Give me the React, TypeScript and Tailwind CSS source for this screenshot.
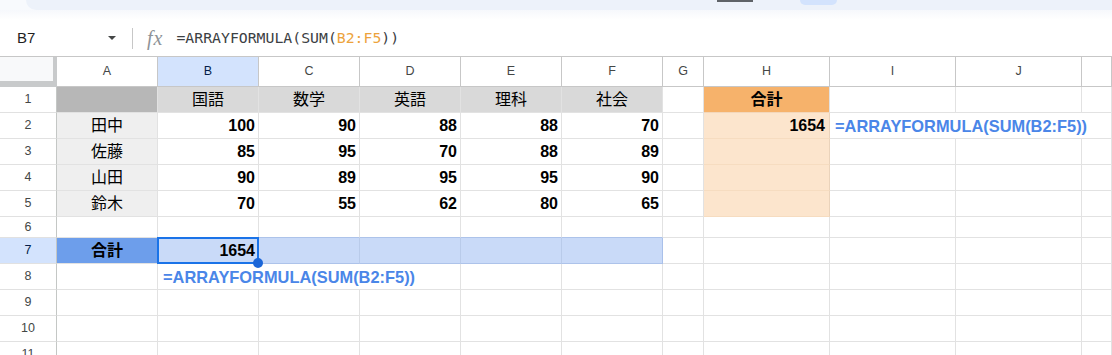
import { ReactNode } from "react";
import { twMerge } from "tailwind-merge";

const GRID =
  "grid grid-cols-[57px_101px_101px_101px_101px_101px_101px_41px_126px_126px_126px_1fr]";

const FONT = "font-['Liberation_Sans','Noto_Sans_CJK_JP',sans-serif]";

const FORMULA = "=ARRAYFORMULA(SUM(B2:F5))";

const scores = [
  { name: "田中", vals: [100, 90, 88, 88, 70] },
  { name: "佐藤", vals: [85, 95, 70, 88, 89] },
  { name: "山田", vals: [90, 89, 95, 95, 90] },
  { name: "鈴木", vals: [70, 55, 62, 80, 65] },
];

const subjects = ["国語", "数学", "英語", "理科", "社会"];

function Cell({
  className = "",
  children,
}: {
  className?: string;
  children?: ReactNode;
}) {
  return (
    <div
      className={twMerge(
        "relative flex items-end border-r border-b border-[#e2e2e2] pb-[3px] px-[3px] text-[16px] leading-[18px] text-black whitespace-nowrap",
        className
      )}
    >
      {children}
    </div>
  );
}

function RowHeader({ n, active = false }: { n: number; active?: boolean }) {
  return (
    <div
      className={twMerge(
        "flex items-center justify-center border-r border-b border-r-[#c4c7c5] border-b-[#e1e1e1] text-[12.5px] text-[#444746]",
        active && "bg-[#d3e3fd] text-[#041e49]"
      )}
    >
      {n}
    </div>
  );
}

const Empty = ({ n }: { n: number }) => (
  <>
    {Array.from({ length: n }).map((_, i) => (
      <Cell key={i} />
    ))}
  </>
);

export default function App() {
  return (
    <div className={`w-[1112px] h-[355px] overflow-hidden bg-white ${FONT}`}>
      {/* toolbar edge */}
      <div className="h-[10px] bg-[#f8fafd] flex">
        <div className="ml-[26px] flex-1 flex items-start bg-[#edf2fa] rounded-bl-[12px]">
          <div className="ml-[691px] w-[36px] h-[2px] bg-[#5f6368]" />
          <div className="ml-[47px] w-[37px] h-[5px] rounded-b-[6px] bg-[#d3e3fd]" />
        </div>
      </div>
      <div className="h-[10px] bg-gradient-to-b from-[#f6f8fc] to-white" />

      {/* formula bar */}
      <div className="h-[37px] flex items-center border-b border-[#c7c7c7]">
        <div className="w-[120px] flex items-center justify-between pl-[17px] pr-[4px]">
          <span className="text-[15px] text-[#1f1f1f]">B7</span>
          <svg width="8" height="4" viewBox="0 0 8 4">
            <polygon points="0,0 8,0 4,4" fill="#444746" />
          </svg>
        </div>
        <div className="ml-[12px] w-px h-[21px] bg-[#c7c7c7]" />
        <span className="ml-[14px] font-['Liberation_Serif',serif] italic text-[20px] tracking-[1px] text-[#8e9398] leading-none">
          fx
        </span>
        <span className="ml-[13px] font-['DejaVu_Sans_Mono',monospace] text-[14.8px] text-[#3c4043]">
          =ARRAYFORMULA(SUM(<span className="text-[#eda33c]">B2:F5</span>))
        </span>
      </div>

      {/* column headers */}
      <div className={`${GRID} h-[30px]`}>
        <div className="bg-[#f8f9fa] border-r-[4px] border-b-[6px] border-[#c8cacb]" />
        {["A", "B", "C", "D", "E", "F", "G", "H", "I", "J", ""].map((c) => (
          <div
            key={c || "K"}
            className={twMerge(
              "flex items-center justify-center border-r border-b border-[#c7c7c7] text-[12.5px] text-[#444746]",
              c === "B" && "bg-[#d3e3fd] text-[#041e49]"
            )}
          >
            {c}
          </div>
        ))}
      </div>

      {/* row 1 */}
      <div className={`${GRID} h-[26px]`}>
        <RowHeader n={1} />
        <Cell className="bg-[#b7b7b7]" />
        {subjects.map((s) => (
          <Cell key={s} className="bg-[#d9d9d9] justify-center">
            {s}
          </Cell>
        ))}
        <Cell />
        <Cell className="bg-[#f6b26b] justify-center font-bold border-b-[#f3d7bb]">
          合計
        </Cell>
        <Empty n={3} />
      </div>

      {/* rows 2-5 */}
      {scores.map((r, i) => (
        <div key={r.name} className={`${GRID} h-[26px]`}>
          <RowHeader n={i + 2} />
          <Cell className="bg-[#efefef] justify-center">{r.name}</Cell>
          {r.vals.map((v, j) => (
            <Cell key={j} className="justify-end font-bold">
              {v}
            </Cell>
          ))}
          <Cell />
          <Cell className="bg-[#fce5cd] justify-end font-bold border-b-[#f6dcc0] border-r-[#ead3bb] pr-[4px]">
            {i === 0 ? "1654" : ""}
          </Cell>
          {i === 0 ? (
            <Cell className="col-span-3 font-bold text-[16.4px] leading-[18px] text-[#4a86e8] pl-[5px]">
              {FORMULA}
            </Cell>
          ) : (
            <Empty n={3} />
          )}
        </div>
      ))}

      {/* row 6 */}
      <div className={`${GRID} h-[21px]`}>
        <RowHeader n={6} />
        <Cell />
        <Cell />
        <Cell className="border-b-[#adc3ea]" />
        <Cell className="border-b-[#adc3ea]" />
        <Cell className="border-b-[#adc3ea]" />
        <Cell className="border-b-[#adc3ea]" />
        <Empty n={5} />
      </div>

      {/* row 7 */}
      <div className={`${GRID} h-[26px]`}>
        <RowHeader n={7} active />
        <Cell className="bg-[#6d9eeb] justify-center font-bold">合計</Cell>
        <Cell className="bg-[#c9daf8] justify-end font-bold z-10">
          1654
          <span className="absolute -left-[1px] -top-[1px] -right-[1px] -bottom-[1px] border-2 border-[#1a73e8]" />
          <span className="absolute -right-[5px] -bottom-[5px] w-[10px] h-[10px] rounded-full bg-[#1b66d8]" />
        </Cell>
        <Cell className="bg-[#c9daf8] border-r-[#b9cbea] border-b-[#adc3ea]" />
        <Cell className="bg-[#c9daf8] border-r-[#b9cbea] border-b-[#adc3ea]" />
        <Cell className="bg-[#c9daf8] border-r-[#b9cbea] border-b-[#adc3ea]" />
        <Cell className="bg-[#c9daf8] border-r-[#a9c0ea] border-b-[#adc3ea]" />
        <Empty n={5} />
      </div>

      {/* row 8 */}
      <div className={`${GRID} h-[26px]`}>
        <RowHeader n={8} />
        <Cell />
        <Cell className="col-span-3 font-bold text-[16.4px] leading-[18px] text-[#4a86e8] pl-[5px]">
          {FORMULA}
        </Cell>
        <Empty n={7} />
      </div>

      {[9, 10, 11].map((n) => (
        <div key={n} className={`${GRID} h-[26px]`}>
          <RowHeader n={n} />
          <Empty n={11} />
        </div>
      ))}
    </div>
  );
}
